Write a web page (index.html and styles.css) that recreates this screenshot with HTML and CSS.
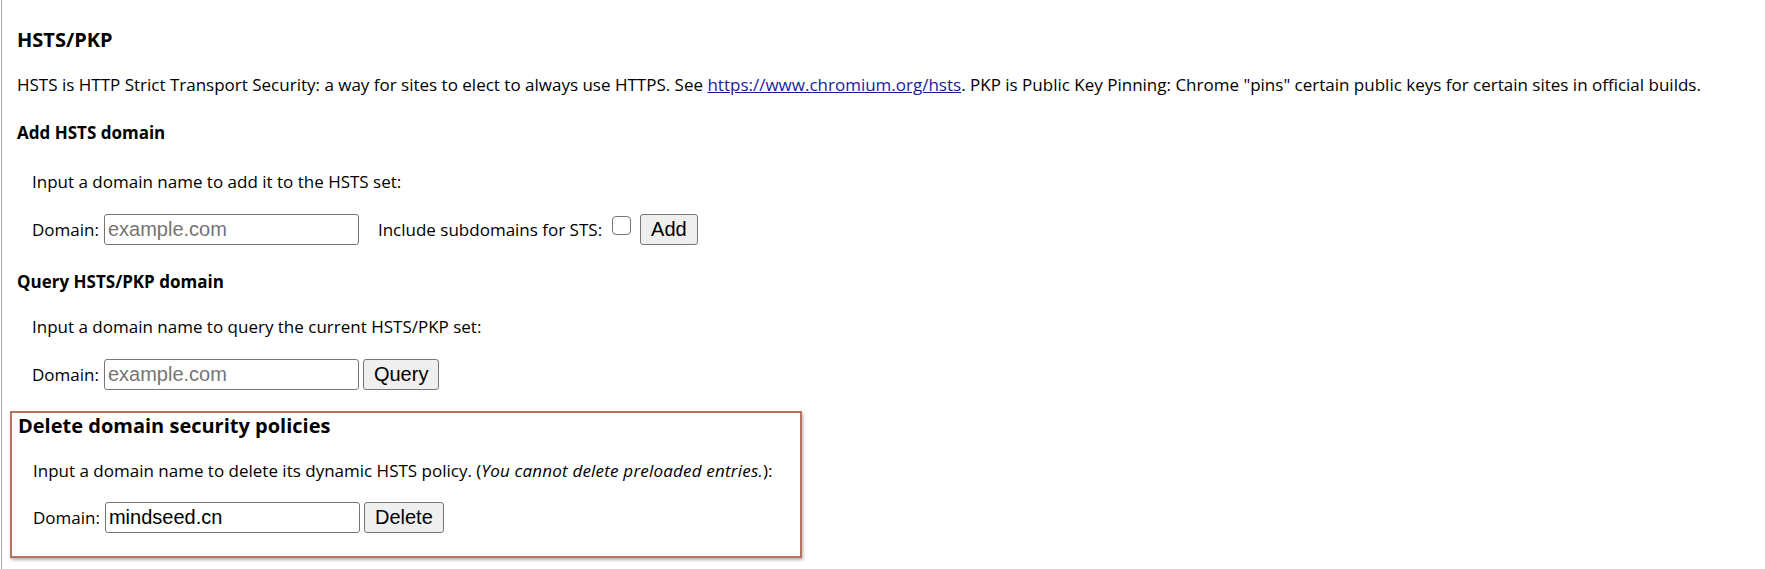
FILE: index.html
```html
<!DOCTYPE html>
<html lang="en">
<head>
<meta charset="utf-8">
<title>HSTS/PKP</title>
<link rel="stylesheet" href="styles.css">
</head>
<body>
<div class="page">
  <h2 class="title">HSTS/PKP</h2>
  <p class="intro">HSTS is HTTP Strict Transport Security: a way for sites to elect to always use HTTPS. See <a href="#">https://www.chromium.org/hsts</a>. PKP is Public Key Pinning: Chrome "pins" certain public keys for certain sites in official builds.</p>

  <h3 class="sub sub-add">Add HSTS domain</h3>
  <p class="hint">Input a domain name to add it to the HSTS set:</p>
  <div class="row">
    <label class="lbl">Domain:</label>
    <input class="field" type="text" placeholder="example.com">
    <label class="lbl lbl-sts">Include subdomains for STS:</label>
    <span class="check"></span>
    <button class="btn btn-add">Add</button>
  </div>

  <h3 class="sub sub-query">Query HSTS/PKP domain</h3>
  <p class="hint hint-query">Input a domain name to query the current HSTS/PKP set:</p>
  <div class="row">
    <label class="lbl">Domain:</label>
    <input class="field" type="text" placeholder="example.com">
    <button class="btn">Query</button>
  </div>

  <section class="delete-box">
    <h2 class="box-title">Delete domain security policies</h2>
    <p class="hint hint-box">Input a domain name to delete its dynamic HSTS policy. (<em>You cannot delete preloaded entries.</em>):</p>
    <div class="row row-box">
      <label class="lbl">Domain:</label>
      <input class="field" type="text" value="mindseed.cn">
      <button class="btn">Delete</button>
    </div>
  </section>
</div>
</body>
</html>
```

FILE: styles.css
```css
html, body {
  margin: 0;
  padding: 0;
  background: #ffffff;
}

body {
  font-family: "Open Sans", "Noto Sans", sans-serif;
  color: #000;
}

.page {
  margin-left: 1px;
  border-left: 1px solid #a8a8a8;
  min-height: 569px;
  padding-left: 15px;
  padding-top: 28px;
  box-sizing: border-box;
}

.title {
  margin: 0;
  font-size: 20px;
  line-height: 24px;
  font-weight: 700;
}

.intro {
  margin: 21px 0 0;
  font-size: 17px;
  line-height: 24px;
  white-space: nowrap;
}

.intro a {
  color: #1a1a9c;
  text-decoration: underline;
}

.sub {
  margin: 0;
  font-size: 17px;
  line-height: 24px;
  font-weight: 700;
}

.sub-add { margin-top: 24px; }
.sub-query { margin-top: 26px; }

.hint {
  margin: 25px 0 0 15px;
  font-size: 17px;
  line-height: 24px;
}

.hint em {
  letter-spacing: 0.2px;
}

.hint-query {
  margin-top: 21px;
}

.row {
  margin: 20px 0 0 15px;
  display: flex;
  align-items: center;
  height: 30px;
  font-size: 17px;
}

.lbl {
  margin-right: 5px;
}

.field {
  box-sizing: border-box;
  width: 255px;
  height: 31px;
  padding: 1px 3px;
  border: 1px solid #767676;
  border-radius: 3px;
  font-family: "Liberation Sans", Arial, sans-serif;
  font-size: 20px;
  color: #000;
  background: #fff;
}

.field::placeholder {
  color: #757575;
}

.lbl-sts {
  margin-left: 19px;
  margin-right: 10px;
}

.check {
  box-sizing: border-box;
  width: 19px;
  height: 19px;
  border: 1px solid #767676;
  border-radius: 4px;
  align-self: flex-start;
  margin-top: 2px;
  margin-right: 9px;
}

.btn {
  box-sizing: border-box;
  height: 31px;
  margin-left: 4px;
  padding: 0 10px;
  border: 1px solid #767676;
  border-radius: 3px;
  background: #efefef;
  font-family: "Liberation Sans", Arial, sans-serif;
  font-size: 20px;
  color: #000;
}

.btn-add {
  margin-left: 0;
}

.delete-box {
  box-sizing: border-box;
  width: 792px;
  height: 147px;
  margin: 22px 0 0 -7px;
  padding: 1px 0 0 6px;
  border: 2px solid #b8735f;
  box-shadow: 1px 2px 3px rgba(0, 0, 0, 0.3);
}

.box-title {
  margin: 0;
  font-size: 20px;
  line-height: 24px;
  font-weight: 700;
}

.hint-box {
  margin-top: 21px;
}

.row-box {
  margin-top: 19px;
}
```
